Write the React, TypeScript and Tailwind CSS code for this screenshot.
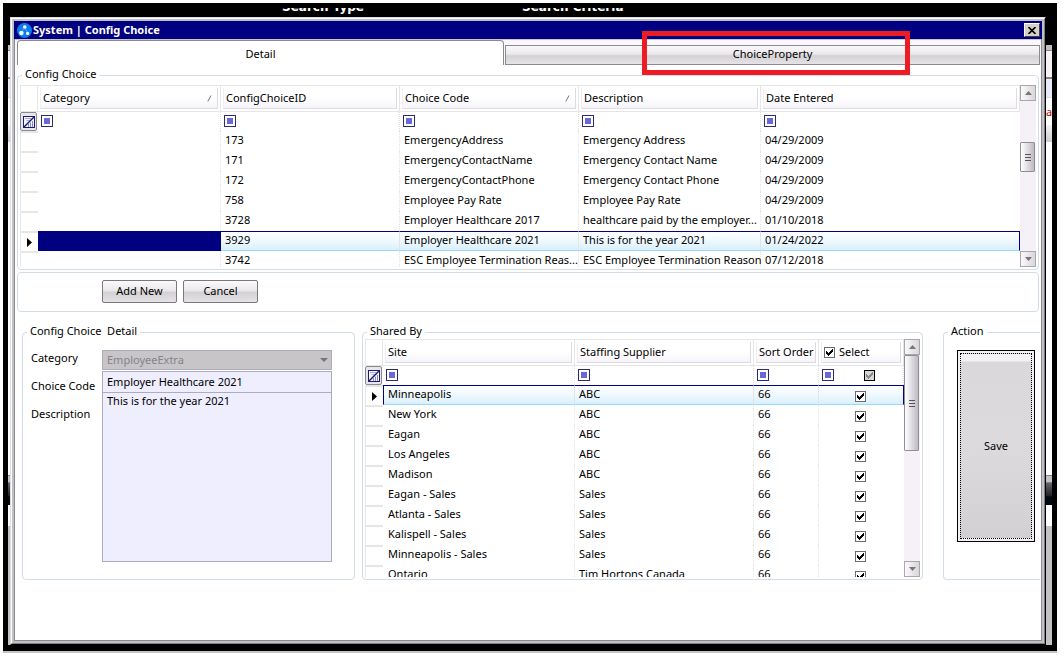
import React from "react";

type ConfigRow = { id: string; code: string; description: string; entered: string; selected?: boolean };
type SiteRow = { site: string; supplier: string; order: string; selected?: boolean };

const configRows: ConfigRow[] = [
  { id: "173", code: "EmergencyAddress", description: "Emergency Address", entered: "04/29/2009" },
  { id: "171", code: "EmergencyContactName", description: "Emergency Contact Name", entered: "04/29/2009" },
  { id: "172", code: "EmergencyContactPhone", description: "Emergency Contact Phone", entered: "04/29/2009" },
  { id: "758", code: "Employee Pay Rate", description: "Employee Pay Rate", entered: "04/29/2009" },
  { id: "3728", code: "Employer Healthcare 2017", description: "healthcare paid by the employer...", entered: "01/10/2018" },
  { id: "3929", code: "Employer Healthcare 2021", description: "This is for the year 2021", entered: "01/24/2022", selected: true },
  { id: "3742", code: "ESC Employee Termination Reas...", description: "ESC Employee Termination Reason", entered: "07/12/2018" },
];

const siteRows: SiteRow[] = [
  { site: "Minneapolis", supplier: "ABC", order: "66", selected: true },
  { site: "New York", supplier: "ABC", order: "66" },
  { site: "Eagan", supplier: "ABC", order: "66" },
  { site: "Los Angeles", supplier: "ABC", order: "66" },
  { site: "Madison", supplier: "ABC", order: "66" },
  { site: "Eagan - Sales", supplier: "Sales", order: "66" },
  { site: "Atlanta - Sales", supplier: "Sales", order: "66" },
  { site: "Kalispell - Sales", supplier: "Sales", order: "66" },
  { site: "Minneapolis - Sales", supplier: "Sales", order: "66" },
  { site: "Ontario", supplier: "Tim Hortons Canada", order: "66" },
];

const buttonFace =
  "bg-[linear-gradient(#fbf9fb,#ebe8eb_45%,#d4d1d4_55%,#e6e3e6)]";
const selectedFace = "border-t border-b border-t-[#000080] border-b-[#99d9fb] bg-[linear-gradient(#ffffff,#f2faff_40%,#d9effc)]";

function AppLogo() {
  return (
    <svg width="15" height="15" viewBox="0 0 15 15" aria-hidden="true">
      <circle cx="7.5" cy="7.5" r="7.5" fill="#0a7bf0" />
      <path d="M7.5 4 4 10.5M7.5 4l3.5 6.5" stroke="#4da3f7" strokeWidth="1" />
      <circle cx="7.8" cy="4" r="1.8" fill="#fff" />
      <circle cx="4.4" cy="10" r="2.2" fill="#fff" />
      <circle cx="10.6" cy="10.4" r="1.6" fill="#fff" />
    </svg>
  );
}

function FilterBox() {
  return (
    <svg width="12" height="12" viewBox="0 0 12 12" className="block" aria-hidden="true">
      <rect x="0.5" y="0.5" width="11" height="11" fill="#fff" stroke="#2b2b70" />
      <rect x="3" y="3" width="6" height="6" fill="#6a68d6" />
    </svg>
  );
}

function ClearFilterButton() {
  return (
    <button
      type="button"
      aria-label="Clear filters"
      className="flex h-[19px] w-[17px] items-center justify-center rounded-[2px] border border-[#8b888e] bg-[#e8e5ec] p-0"
    >
      <svg width="12" height="12" viewBox="0 0 12 12" className="shrink-0">
        <rect x="0.5" y="0.5" width="11" height="11" fill="#f4f4ff" stroke="#1d1d66" />
        <path d="M2 2.5h6M3.500 4.500h3" stroke="#a9a9dc" />
        <path d="M1 11 11 1" stroke="#1d1d66" strokeWidth="1.4" />
        <path d="M5.500 11V8M7.500 11V6.500M9.500 11V5" stroke="#8a88dc" />
      </svg>
    </button>
  );
}

function SortMark() {
  return (
    <svg width="5" height="7" viewBox="0 0 5 7" className="mr-[5px]" aria-hidden="true">
      <path d="M0.8 6.5 4 0.5" stroke="#777" />
    </svg>
  );
}

function RowArrow() {
  return (
    <svg width="5" height="9" viewBox="0 0 5 9" className="mx-auto mt-[5px] block" aria-hidden="true">
      <path d="M0 0v9l5-4.5z" fill="#000" />
    </svg>
  );
}

function Check({ label, mixed = false, showLabel = false }: { label: string; mixed?: boolean; showLabel?: boolean }) {
  return (
    <label className="relative inline-flex items-center gap-1 align-top">
      <span className="grid h-[11px] w-[11px]">
        <input
          type="checkbox"
          defaultChecked
          aria-label={showLabel ? undefined : label}
          className={
            mixed
              ? "col-start-1 row-start-1 h-[11px] w-[11px] appearance-none border border-black bg-[#d6d6d6]"
              : "col-start-1 row-start-1 h-[11px] w-[11px] appearance-none border border-[#6c6c6c] bg-white"
          }
        />
        <svg viewBox="0 0 11 11" width="11" height="11" className="pointer-events-none col-start-1 row-start-1" shapeRendering="crispEdges">
          <path d="M2 4v3l2 2 5-4V2L4 6z" fill={mixed ? "#8a8a8a" : "#000"} />
        </svg>
      </span>
      {showLabel && <span>{label}</span>}
    </label>
  );
}

function ColumnHead({ children, sorted = false }: { children: React.ReactNode; sorted?: boolean }) {
  return (
    <th className="h-[27px] border border-l-0 border-[#e6e6e6] p-[2px] text-left font-normal">
      <div className="flex h-[21px] items-center justify-between border border-t-0 border-[#dcdae2] border-l-[#f0eef4] bg-[linear-gradient(#ffffff_45%,#f7f4fa)] pl-[2px]">
        <span className="whitespace-nowrap">{children}</span>
        {sorted && <SortMark />}
      </div>
    </th>
  );
}

function FilterCell({ children }: { children?: React.ReactNode }) {
  return (
    <td className="h-[19px] border-r border-dotted border-[#dedede] p-0 pb-px pl-[3px]">
      <div className="flex h-3 items-center gap-[30px]">
        <FilterBox />
        {children}
      </div>
    </td>
  );
}

function RowHead({ selected }: { selected?: boolean }) {
  return (
    <td className="h-5 border-t-2 border-l border-[#e6e6e6] p-0 align-top">
      {selected && (
        <div className="h-[18px] overflow-hidden">
          <RowArrow />
        </div>
      )}
    </td>
  );
}

function Cell({
  children,
  selected,
  className = "",
}: {
  children?: React.ReactNode;
  selected?: boolean;
  className?: string;
}) {
  return (
    <td
      className={`h-5 border-r border-r-[#e4e4e4] p-0 pb-[2px] pl-1 leading-4 whitespace-nowrap ${
        selected ? selectedFace : "border-dotted"
      } ${className}`}
    >
      {children}
    </td>
  );
}

function Scrollbar({ thumb }: { thumb: string }) {
  const key = `h-4 w-4 shrink-0 border border-[#a9a6ad] bg-[linear-gradient(90deg,#fbf9fb,#d9d6da)] flex items-center justify-center`;
  return (
    <div className="flex w-4 shrink-0 flex-col bg-[#f6f1f6]">
      <button type="button" aria-label="Scroll up" className={key}>
        <svg width="7" height="4" viewBox="0 0 7 4"><path d="M0 4 3.5 0 7 4z" fill="#77747a" /></svg>
      </button>
      <div className="flex flex-1 flex-col">
        <div className={`flex w-[15px] flex-col items-center justify-center gap-px rounded-[1px] border border-[#918e96] bg-[linear-gradient(90deg,#ffffff,#e4e1e6_45%,#bdbac0)] ${thumb}`}>
          <span className="h-px w-[6px] bg-[#55525a]" />
          <span className="mt-px h-px w-[6px] bg-[#55525a]" />
          <span className="mt-px h-px w-[6px] bg-[#55525a]" />
        </div>
      </div>
      <button type="button" aria-label="Scroll down" className={key}>
        <svg width="7" height="4" viewBox="0 0 7 4"><path d="M0 0h7L3.500 4z" fill="#77747a" /></svg>
      </button>
    </div>
  );
}

function Legend({ children }: { children: React.ReactNode }) {
  return <legend className="ml-[2px] h-[14px] px-[3px] leading-[12px]">{children}</legend>;
}

function Backdrop({ side }: { side: "left" | "right" }) {
  return (
    <div aria-hidden="true" className={side === "left" ? "flex w-[2px] shrink-0 flex-col overflow-hidden bg-white" : "flex w-[6px] shrink-0 flex-col overflow-hidden bg-white"}>
      <div className="h-[28px] bg-black" />
      <div className="h-[5px] bg-[#c0c0c0]" />
      <div className="h-[28px] border-t border-b border-[#85828a] bg-[#f6f1f5]" />
      <div className="h-[20px] border-t border-b border-t-[#85828a] border-b-[#d5d9ee] bg-[#e8eafa]" />
      <div className="h-[27px] leading-[28px] text-[#c00000]">{side === "right" && "av"}</div>
      <div className="h-[17px] bg-[linear-gradient(#f4f2f4,#cfccd0)]" />
      <div className="h-[333px]" />
      <div className="h-[8px] border-t border-b border-[#85828a] bg-[#c5c2c5]" />
      <div className="h-[22px] bg-[linear-gradient(#66666a,#1c1f24_60%,#000810_62%)]" />
      <div className="h-[21px]" />
      <div className="flex-1 bg-[#c5c2c5]" />
    </div>
  );
}

function ConfigGrid() {
  return (
    <div className="flex h-[182px]">
      <div className="min-w-0 flex-1 overflow-hidden">
        <table className="w-full table-fixed border-separate border-spacing-0">
          <colgroup>
            <col className="w-[18px]" />
            <col className="w-[183px]" />
            <col className="w-[179px]" />
            <col className="w-[179px]" />
            <col className="w-[182px]" />
            <col />
          </colgroup>
          <thead>
            <tr>
              <td className="border border-[#e6e6e6] p-0" />
              <ColumnHead sorted>Category</ColumnHead>
              <ColumnHead>ConfigChoiceID</ColumnHead>
              <ColumnHead sorted>Choice Code</ColumnHead>
              <ColumnHead>Description</ColumnHead>
              <ColumnHead>Date Entered</ColumnHead>
            </tr>
          </thead>
          <tbody>
            <tr>
              <td className="p-0"><ClearFilterButton /></td>
              <FilterCell />
              <FilterCell />
              <FilterCell />
              <FilterCell />
              <td className="p-0 pb-px pl-[3px]"><FilterBox /></td>
            </tr>
            {configRows.map((row) => (
              <tr key={row.id}>
                <RowHead selected={row.selected} />
                <td className={row.selected ? "bg-[#000080] p-0" : "border-r border-dotted border-[#e4e4e4] p-0"} />
                <Cell selected={row.selected}>{row.id}</Cell>
                <Cell selected={row.selected}>{row.code}</Cell>
                <Cell selected={row.selected}>{row.description}</Cell>
                <Cell selected={row.selected} className={row.selected ? "border-r-[#000080]!" : "border-r-0"}>
                  {row.entered}
                </Cell>
              </tr>
            ))}
          </tbody>
        </table>
      </div>
      <Scrollbar thumb="mt-[41px] h-[30px]" />
    </div>
  );
}

function SharedGrid() {
  return (
    <div className="flex h-[238px]">
      <div className="min-w-0 flex-1 overflow-hidden">
        <table className="w-full table-fixed border-separate border-spacing-0">
          <colgroup>
            <col className="w-[18px]" />
            <col />
            <col className="w-[179px]" />
            <col className="w-[65px]" />
            <col className="w-[85px]" />
          </colgroup>
          <thead>
            <tr>
              <td className="border border-[#e6e6e6] p-0" />
              <ColumnHead>Site</ColumnHead>
              <ColumnHead>Staffing Supplier</ColumnHead>
              <ColumnHead>Sort Order</ColumnHead>
              <ColumnHead><Check label="Select" showLabel /></ColumnHead>
            </tr>
          </thead>
          <tbody>
            <tr>
              <td className="p-0"><ClearFilterButton /></td>
              <FilterCell />
              <FilterCell />
              <FilterCell />
              <FilterCell><Check label="Filter selected" mixed /></FilterCell>
            </tr>
            {siteRows.map((row) => (
              <tr key={row.site}>
                <RowHead selected={row.selected} />
                <Cell selected={row.selected} className={row.selected ? "border-l border-l-[#000080]" : "pl-[5px]!"}>
                  {row.site}
                </Cell>
                <Cell selected={row.selected}>{row.supplier}</Cell>
                <Cell selected={row.selected}>{row.order}</Cell>
                <Cell selected={row.selected} className={row.selected ? "border-r-[#000080]! pb-0!" : "border-r-0 pb-0!"}>
                  <div className="flex justify-center pt-[2px] pr-[6px]"><Check label={`Share with ${row.site}`} /></div>
                </Cell>
              </tr>
            ))}
          </tbody>
        </table>
      </div>
      <Scrollbar thumb="h-[96px]" />
    </div>
  );
}

export default function App() {
  const group = "min-w-0 rounded-[4px] border border-[#d3dde7]";
  const push = `h-[23px] w-[75px] rounded-[2px] border border-[#7a777d] pb-[2px] ${buttonFace}`;
  return (
    <div className="flex min-h-screen flex-col bg-white pt-[3px] pr-[7px] pb-[5px] pl-[3px] font-['Noto_Sans','Open_Sans',sans-serif] text-[11px] leading-[14px] text-black">
      <div className="flex flex-1 flex-col border-b-2 border-[#c4c4c4]">
        <div className="flex flex-1 flex-col border-r-[5px] border-b-[6px] border-l-[5px] border-black bg-black">
          <header className="h-[14px] bg-black pt-[5px]">
            <div className="flex h-[6px] items-end overflow-hidden font-['DejaVu_Sans','Noto_Sans',sans-serif] text-[12px] font-bold text-white">
              <span className="ml-[274px] w-[240px]">Search Type</span>
              <span>Search Criteria</span>
            </div>
          </header>

          <div className="flex flex-1">
            <Backdrop side="left" />
            <main className="flex min-w-0 flex-1 flex-col border-t border-r border-b border-l border-t-[#dcdcdc] border-r-black border-b-black border-l-[#dcdcdc]">
              <div className="flex flex-1 flex-col border-t border-r border-b border-l border-t-white border-r-[#808080] border-b-[#808080] border-l-white bg-[#c0c0c5] p-[2px]">
                <div className="flex h-[18px] items-center bg-[#000080] pr-[2px] pl-[3px] text-white">
                  <AppLogo />
                  <h1 className="ml-px flex-1 text-[11px] font-bold">System | Config Choice</h1>
                  <button
                    type="button"
                    aria-label="Close"
                    className="flex h-[14px] w-4 items-center justify-center border border-t-white border-r-[#404040] border-b-[#404040] border-l-white bg-[#d4d0c8]"
                  >
                    <svg width="8" height="7" viewBox="0 0 8 7"><path d="M0.500 0 7.500 7M7.500 0 0.500 7" stroke="#000" strokeWidth="1.600" /></svg>
                  </button>
                </div>

                <div className="flex flex-1 flex-col border-r border-b border-l border-[#8b8992] bg-white">
                  <div role="tablist" className="flex h-[26px] items-end border-t border-[#c9c6cd] bg-[#faf8fb] pr-px pl-[2px]">
                    <button type="button" role="tab" aria-selected="true" className="h-[25px] min-w-0 flex-[486] rounded-t-[4px] border border-b-0 border-[#8b8992] bg-white pt-[2px]">
                      Detail
                    </button>
                    <div className="relative ml-px h-5 min-w-0 flex-[536]">
                      <button type="button" role="tab" aria-selected="false" className={`block h-5 w-full border border-[#8b8992] pb-[2px] ${buttonFace}`}>
                        ChoiceProperty
                      </button>
                      <div className="pointer-events-none absolute -top-[14px] left-1/2 -ml-[131px] h-[44px] w-[268px] border-[5px] border-[#ed1c24]" />
                    </div>
                  </div>

                  <div className="flex flex-col pt-[3px] pr-[2px] pl-[2px]">
                    <fieldset className={`${group} pt-[3px] pr-[2px] pb-[2px] pl-[2px]`}>
                      <Legend>Config Choice</Legend>
                      <ConfigGrid />
                    </fieldset>
                    <div className={`${group} mt-[2px] flex h-10 gap-[6px] pt-[7px] pl-[84px]`}>
                      <button type="button" className={push}>Add New</button>
                      <button type="button" className={push}>Cancel</button>
                    </div>
                  </div>

                  <div className="mt-[13px] flex items-stretch pr-px pl-[7px]">
                    <fieldset className={`${group} w-[333px] shrink-0 pr-[22px] pb-[17px] pl-[2px]`}>
                      <Legend>Config Choice&nbsp; Detail</Legend>
                      <div className="flex pl-[6px]">
                        <div className="flex w-[71px] shrink-0 flex-col pt-[5px] leading-7">
                          <label htmlFor="category">Category</label>
                          <label htmlFor="choice-code">Choice Code</label>
                          <label htmlFor="description">Description</label>
                        </div>
                        <div className="flex min-w-0 flex-1 flex-col pt-[11px]">
                          <div className="grid items-center">
                            <select
                              id="category"
                              disabled
                              className="col-start-1 row-start-1 h-5 w-full appearance-none border border-[#aeacbc] bg-[#c8c5c8] pl-1 text-[#85828a] opacity-100"
                            >
                              <option>EmployeeExtra</option>
                            </select>
                            <svg width="8" height="4" viewBox="0 0 8 4" className="pointer-events-none col-start-1 row-start-1 mr-1 justify-self-end">
                              <path d="M0 0h8L4 4z" fill="#77747a" />
                            </svg>
                          </div>
                          <input
                            id="choice-code"
                            defaultValue="Employer Healthcare 2021"
                            className="mt-px h-[22px] border border-[#aeacbc] bg-[#efeeff] px-1 pb-[2px] outline-none"
                          />
                          <textarea
                            id="description"
                            defaultValue="This is for the year 2021"
                            className="-mt-px block h-[170px] resize-none border border-[#aeacbc] bg-[#efeeff] px-1 py-px outline-none"
                          />
                        </div>
                      </div>
                    </fieldset>

                    <fieldset className={`${group} ml-[7px] flex-1 pr-[2px] pb-[2px] pl-[2px]`}>
                      <Legend>Shared By</Legend>
                      <SharedGrid />
                    </fieldset>

                    <fieldset className="ml-5 w-[97px] shrink-0 rounded-l-[4px] border border-r-0 border-[#d3dde7] pr-[5px] pl-[2px]">
                      <Legend>Action</Legend>
                      <div className="pt-[11px] pl-[11px]">
                        <button type="button" className="h-[192px] w-full border border-black bg-[#f4f1f4] p-[2px]">
                          <span className="flex h-full items-center justify-center border border-dotted border-black bg-[linear-gradient(#f4f1f4_7px,#dad8db_8px,#dcdadd_50%,#d2d0d2)]">
                            Save
                          </span>
                        </button>
                      </div>
                    </fieldset>
                  </div>
                </div>
              </div>
            </main>
            <Backdrop side="right" />
          </div>
        </div>
      </div>
    </div>
  );
}
